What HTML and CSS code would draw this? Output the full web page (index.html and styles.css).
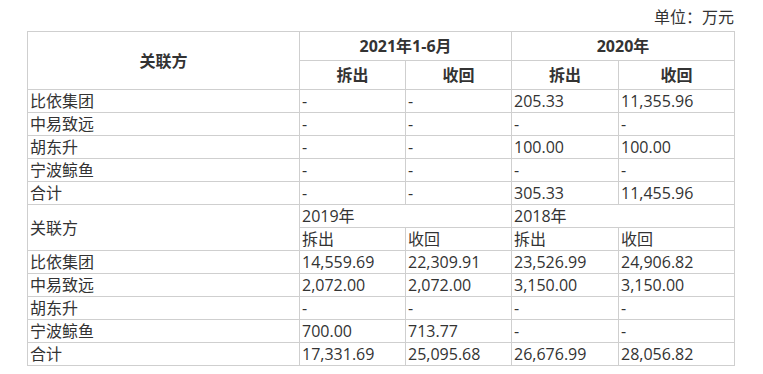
FILE: index.html
```html
<!DOCTYPE html>
<html>
<head>
  <link rel="stylesheet" href="styles.css">
</head>
<body>
  <div class="page">
    <div class="unit">单位：万元</div>
    <table class="data-table">
      <colgroup>
        <col class="c-name">
        <col class="c-a">
        <col class="c-b">
        <col class="c-c">
        <col class="c-d">
      </colgroup>
      <tr class="head">
        <th rowspan="2">关联方</th>
        <th colspan="2">2021年1-6月</th>
        <th colspan="2">2020年</th>
      </tr>
      <tr class="head">
        <th>拆出</th>
        <th>收回</th>
        <th>拆出</th>
        <th>收回</th>
      </tr>
      <tr><td>比依集团</td><td>-</td><td>-</td><td>205.33</td><td>11,355.96</td></tr>
      <tr><td>中易致远</td><td>-</td><td>-</td><td>-</td><td>-</td></tr>
      <tr><td>胡东升</td><td>-</td><td>-</td><td>100.00</td><td>100.00</td></tr>
      <tr><td>宁波鲸鱼</td><td>-</td><td>-</td><td>-</td><td>-</td></tr>
      <tr><td>合计</td><td>-</td><td>-</td><td>305.33</td><td>11,455.96</td></tr>
      <tr>
        <td rowspan="2">关联方</td>
        <td colspan="2">2019年</td>
        <td colspan="2">2018年</td>
      </tr>
      <tr><td>拆出</td><td>收回</td><td>拆出</td><td>收回</td></tr>
      <tr><td>比依集团</td><td>14,559.69</td><td>22,309.91</td><td>23,526.99</td><td>24,906.82</td></tr>
      <tr><td>中易致远</td><td>2,072.00</td><td>2,072.00</td><td>3,150.00</td><td>3,150.00</td></tr>
      <tr><td>胡东升</td><td>-</td><td>-</td><td>-</td><td>-</td></tr>
      <tr><td>宁波鲸鱼</td><td>700.00</td><td>713.77</td><td>-</td><td>-</td></tr>
      <tr><td>合计</td><td>17,331.69</td><td>25,095.68</td><td>26,676.99</td><td>28,056.82</td></tr>
    </table>
  </div>
</body>
</html>
```

FILE: styles.css
```css
body {
  margin: 0;
  font-family: "Open Sans", "Noto Sans CJK SC", sans-serif;
  font-size: 16px;
  color: #333;
}

.page {
  width: 707px;
  padding: 4px 0 0 27px;
}

.unit {
  text-align: right;
  line-height: 26px;
  height: 27px;
}

.data-table {
  width: 707px;
  border-collapse: collapse;
  table-layout: fixed;
}

.c-name { width: 272px; }
.c-a { width: 106px; }
.c-b { width: 106px; }
.c-c { width: 107px; }
.c-d { width: 116px; }

.data-table th,
.data-table td {
  border: 1px solid #cfcfcf;
  padding: 0 2px;
  white-space: nowrap;
  overflow: hidden;
}

.data-table td {
  height: 22px;
  line-height: 22px;
  text-align: left;
}

.data-table th {
  height: 28px;
  line-height: 28px;
  font-weight: bold;
  text-align: center;
}
```
